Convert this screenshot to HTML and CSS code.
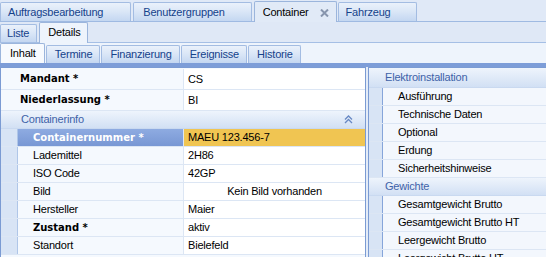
FILE: index.html
```html
<!DOCTYPE html>
<html lang="de">
<head>
    <meta charset="UTF-8">
    <title>Container Details</title>
    <link rel="stylesheet" href="styles.css">
</head>
<body>
    <div class="tabbar main-tabs">
        <div class="tab">Auftragsbearbeitung</div>
        <div class="tab">Benutzergruppen</div>
        <div class="tab active">Container<span class="close"><svg width="9" height="8" viewBox="0 0 9 8"><path d="M1 0.5 L8 7.5 M8 0.5 L1 7.5" stroke="#8795ad" stroke-width="2"/></svg></span></div>
        <div class="tab last">Fahrzeug</div>
    </div>
    <div class="tabbar sub-tabs">
        <div class="tab">Liste</div>
        <div class="tab active">Details</div>
    </div>
    <div class="tabbar page-tabs">
        <div class="tab active">Inhalt</div>
        <div class="tab">Termine</div>
        <div class="tab">Finanzierung</div>
        <div class="tab">Ereignisse</div>
        <div class="tab">Historie</div>
    </div>

    <div class="content">
        <div class="grid">
            <div class="row top">
                <div class="label bold">Mandant *</div>
                <div class="value">CS</div>
            </div>
            <div class="row top">
                <div class="label bold">Niederlassung *</div>
                <div class="value">BI</div>
            </div>
            <div class="row category">
                <span class="cat-title">Containerinfo</span>
                <svg class="collapse" width="9" height="9" viewBox="0 0 9 9"><path d="M1 4.5 L4.5 1 L8 4.5 M1 8 L4.5 4.5 L8 8" fill="none" stroke="#6788c4" stroke-width="1.3"/></svg>
            </div>
            <div class="row sub selected">
                <div class="gutter"></div>
                <div class="label bold">Containernummer *</div>
                <div class="value">MAEU 123.456-7</div>
            </div>
            <div class="row sub">
                <div class="gutter"></div>
                <div class="label">Lademittel</div>
                <div class="value">2H86</div>
            </div>
            <div class="row sub">
                <div class="gutter"></div>
                <div class="label">ISO Code</div>
                <div class="value">42GP</div>
            </div>
            <div class="row sub">
                <div class="gutter"></div>
                <div class="label">Bild</div>
                <div class="value center">Kein Bild vorhanden</div>
            </div>
            <div class="row sub">
                <div class="gutter"></div>
                <div class="label">Hersteller</div>
                <div class="value">Maier</div>
            </div>
            <div class="row sub">
                <div class="gutter"></div>
                <div class="label bold">Zustand *</div>
                <div class="value">aktiv</div>
            </div>
            <div class="row sub">
                <div class="gutter"></div>
                <div class="label">Standort</div>
                <div class="value">Bielefeld</div>
            </div>
        </div>

        <div class="side">
            <div class="row category head">Elektroinstallation</div>
            <div class="row sub"><div class="gutter"></div><div class="label">Ausführung</div></div>
            <div class="row sub"><div class="gutter"></div><div class="label">Technische Daten</div></div>
            <div class="row sub"><div class="gutter"></div><div class="label">Optional</div></div>
            <div class="row sub"><div class="gutter"></div><div class="label">Erdung</div></div>
            <div class="row sub"><div class="gutter"></div><div class="label">Sicherheitshinweise</div></div>
            <div class="row category">Gewichte</div>
            <div class="row sub"><div class="gutter"></div><div class="label">Gesamtgewicht Brutto</div></div>
            <div class="row sub"><div class="gutter"></div><div class="label">Gesamtgewicht Brutto HT</div></div>
            <div class="row sub"><div class="gutter"></div><div class="label">Leergewicht Brutto</div></div>
            <div class="row sub"><div class="gutter"></div><div class="label">Leergewicht Brutto HT</div></div>
        </div>
    </div>
</body>
</html>
```

FILE: styles.css
```css
body {
    margin: 0;
    width: 546px;
    height: 257px;
    overflow: hidden;
    font-family: "Liberation Sans", Arial, sans-serif;
    font-size: 11px;
    letter-spacing: -0.2px;
    color: #000;
    background-color: #dfe8f6;
}

/* tab strips */
.tabbar {
    display: flex;
    align-items: flex-end;
    box-sizing: border-box;
    white-space: nowrap;
}
.tab {
    box-sizing: border-box;
    border: 1px solid #a3bce2;
    border-bottom: none;
    border-radius: 2px 2px 0 0;
    background: linear-gradient(#eaf1fb, #dbe7f7 45%, #c4d7f1);
    color: #15428b;
    margin-right: 2px;
}
.tab.active {
    color: #000;
    border-color: #9bb5dc;
}

.main-tabs {
    height: 22px;
    background-color: #e0e9f7;
    border-bottom: 1px solid #9fbae2;
}
.main-tabs .tab {
    height: 19px;
    line-height: 18px;
    padding: 0 27px 0 7px;
}
.main-tabs .tab:nth-child(2) {
    padding: 0 26px 0 9px;
}
.main-tabs .tab.active {
    height: 21px;
    line-height: 20px;
    margin-right: 1px;
    margin-bottom: -1px;
    background: #e1eaf7;
    padding: 0 7px 0 8px;
}
.main-tabs .tab.last {
    padding: 0 26px 0 7px;
}
.close {
    display: inline-block;
    margin-left: 11px;
    vertical-align: -1px;
}

.sub-tabs {
    height: 21px;
    background-color: #dfe8f6;
    border-bottom: 1px solid #a5bfe5;
}
.sub-tabs .tab {
    height: 18px;
    line-height: 17px;
    padding: 0 7px 0 6px;
}
.sub-tabs .tab.active {
    height: 21px;
    line-height: 19px;
    margin-bottom: -1px;
    background: #eef4fc;
    padding: 0 7px 0 8px;
}

.page-tabs {
    height: 20px;
    background-color: #eef4fc;
}
.page-tabs .tab {
    height: 18px;
    line-height: 17px;
    padding: 0 7px 0 8px;
    margin-right: 1px;
}
.page-tabs .tab.active {
    height: 20px;
    line-height: 19px;
    background: #f7fafe;
    padding: 0 8px 0 9px;
}

/* content area */
.content {
    display: flex;
    gap: 2px;
    height: 190px;
    border-top: 4px solid #7d9dd8;
    background-color: #e4ecf8;
}
.grid {
    width: 366px;
    box-sizing: border-box;
    border: 1px solid #7b9bd3;
    border-bottom: none;
    padding-top: 1px;
    background-color: #f5f9fe;
}
.side {
    flex: 1;
    border-top: 1px solid #7b9bd3;
    border-left: 1px solid #7b9bd3;
    background-color: #f3f7fd;
}

.row {
    display: flex;
    height: 18px;
    box-sizing: border-box;
    line-height: 17px;
    border-bottom: 1px solid #dce6f4;
}
.row.top {
    height: 21px;
    line-height: 20px;
}
.label {
    box-sizing: border-box;
    white-space: nowrap;
}
.bold {
    font-family: "DejaVu Sans", Verdana, sans-serif;
    font-size: 10px;
    font-weight: bold;
    letter-spacing: 0;
}
.grid .label {
    border-right: 1px solid #dce6f4;
}
.grid .top .label {
    width: 183px;
    padding-left: 19px;
}
.grid .sub .label {
    width: 166px;
    padding-left: 15px;
}
.value {
    flex: 1;
    padding-left: 4px;
    background-color: #fff;
}
.value.center {
    text-align: center;
    padding-left: 0;
}
.gutter {
    box-sizing: border-box;
    width: 17px;
    background-color: #d8e4f5;
    border-right: 1px solid #afc6e8;
}
.side .gutter {
    width: 14px;
    border-right-color: #86a5da;
}
.side .label {
    padding-left: 15px;
}

.row.selected .label {
    background: linear-gradient(#8eabe1, #7897d4);
    color: #fff;
}
.row.selected .value {
    background-color: #f0c552;
}

.row.category {
    align-items: center;
    color: #3e62a8;
    background: linear-gradient(#eef4fc, #d2e0f4);
    border-bottom-color: #c9d9f0;
}
.grid .category {
    padding-left: 20px;
}
.side .category {
    padding-left: 16px;
}
.side .category.head {
    height: 20px;
}
.cat-title {
    flex: 1;
}
.collapse {
    margin-right: 12px;
}
```
